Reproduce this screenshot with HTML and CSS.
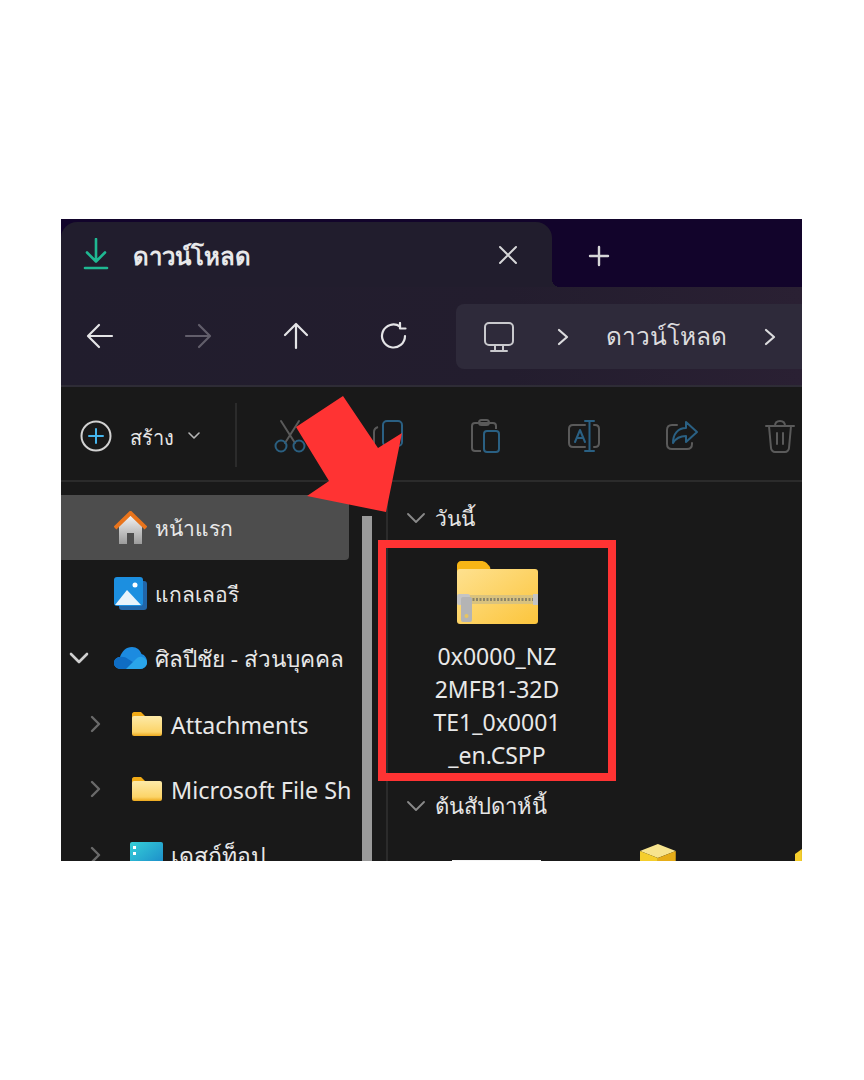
FILE: index.html
```html
<!DOCTYPE html>
<html lang="th">
<head>
    <meta charset="UTF-8">
    <meta name="viewport" content="width=device-width, initial-scale=1.0">
    <title>ดาวน์โหลด</title>
    <link rel="stylesheet" href="styles.css">
</head>
<body>
    <div class="window">
        <!-- Tab strip -->
        <div class="tabstrip">
            <div class="tab">
                <svg class="tab-icon" width="26" height="34" viewBox="0 0 26 34" fill="none" stroke="#1fb892" stroke-width="2.6" stroke-linecap="round" stroke-linejoin="round">
                    <path d="M13 1V23M4 14.500L13 23.500L22 14.500"/>
                    <path d="M2 30H24"/>
                </svg>
                <span class="tab-title">ดาวน์โหลด</span>
                <svg class="tab-close" width="20" height="20" viewBox="0 0 20 20" stroke="#d6d6d8" stroke-width="2" stroke-linecap="round">
                    <path d="M2 2L18 18M18 2L2 18"/>
                </svg>
            </div>
            <svg class="tab-new" width="22" height="22" viewBox="0 0 22 22" stroke="#d6d6d8" stroke-width="2.4" stroke-linecap="round">
                <path d="M11 2V20M2 11H20"/>
            </svg>
        </div>

        <!-- Navigation and address bar -->
        <div class="navbar">
            <div class="nav-buttons">
                <svg width="28" height="26" viewBox="0 0 28 26" fill="none" stroke="#e4e4e6" stroke-width="2.2" stroke-linecap="round" stroke-linejoin="round">
                    <path d="M26 13H3M13 2L2 13L13 24"/>
                </svg>
                <svg width="28" height="26" viewBox="0 0 28 26" fill="none" stroke="#625e6b" stroke-width="2.2" stroke-linecap="round" stroke-linejoin="round">
                    <path d="M2 13H25M15 2L26 13L15 24"/>
                </svg>
                <svg width="26" height="28" viewBox="0 0 26 28" fill="none" stroke="#e4e4e6" stroke-width="2.2" stroke-linecap="round" stroke-linejoin="round">
                    <path d="M13 26V3M2 13L13 2L24 13"/>
                </svg>
                <svg width="28" height="28" viewBox="0 0 28 28" fill="none" stroke="#e4e4e6" stroke-width="2.2" stroke-linecap="round" stroke-linejoin="round">
                    <path d="M25 14A11.500 11.500 0 1 1 20 4.500"/>
                    <path d="M20 1V6.500H25.500"/>
                </svg>
            </div>
            <div class="address">
                <svg class="pc-icon" width="32" height="32" viewBox="0 0 32 32" fill="none" stroke="#c9c9cd" stroke-width="2" stroke-linecap="round" stroke-linejoin="round">
                    <rect x="2" y="2" width="28" height="22" rx="4"/>
                    <path d="M12 24V29M20 24V29M8 30H24"/>
                </svg>
                <svg width="12" height="18" viewBox="0 0 12 18" fill="none" stroke="#dcdcde" stroke-width="2.2" stroke-linecap="round" stroke-linejoin="round"><path d="M2 2L10 9L2 16"/></svg>
                <span class="crumb">ดาวน์โหลด</span>
                <svg width="12" height="18" viewBox="0 0 12 18" fill="none" stroke="#dcdcde" stroke-width="2.2" stroke-linecap="round" stroke-linejoin="round"><path d="M2 2L10 9L2 16"/></svg>
            </div>
        </div>

        <!-- Command bar -->
        <div class="toolbar">
            <div class="new-btn">
                <svg width="32" height="32" viewBox="0 0 32 32" fill="none" stroke-width="2" stroke-linecap="round">
                    <circle cx="16" cy="16" r="14.5" stroke="#d2d2d2"/>
                    <path d="M16 9V23M9 16H23" stroke="#45b6ee"/>
                </svg>
                <span class="new-label">สร้าง</span>
                <svg width="12" height="8" viewBox="0 0 12 8" fill="none" stroke="#b5b5b5" stroke-width="1.6" stroke-linecap="round" stroke-linejoin="round"><path d="M1 1L6 6L11 1"/></svg>
            </div>
            <div class="tool-sep"></div>
            <div class="tools">
                <div class="tool">
                    <svg width="32" height="34" viewBox="0 0 32 34" fill="none" stroke-width="2" stroke-linecap="round">
                        <path d="M7 2L21 24M25 2L11 24" stroke="#5a5a5a"/>
                        <circle cx="7" cy="27" r="5.5" stroke="#2a5f80"/>
                        <circle cx="25" cy="27" r="5.5" stroke="#2a5f80"/>
                    </svg>
                </div>
                <div class="tool">
                    <svg width="32" height="34" viewBox="0 0 32 34" fill="none" stroke-width="2" stroke-linejoin="round">
                        <path d="M6 8C3 9 2 11 2 13V26C2 30 4 32 8 32H18" stroke="#5a5a5a"/>
                        <rect x="11" y="2" width="19" height="25" rx="4" stroke="#2a6083"/>
                    </svg>
                </div>
                <div class="tool">
                    <svg width="32" height="34" viewBox="0 0 32 34" fill="none" stroke-width="2" stroke-linejoin="round">
                        <path d="M11 32H5C3 32 2 31 2 29V7C2 5 3 4 5 4H23C25 4 26 5 26 7V10" stroke="#5a5a5a"/>
                        <rect x="9" y="1" width="10" height="5" rx="2.5" stroke="#5a5a5a"/>
                        <rect x="14" y="12" width="15" height="21" rx="3" stroke="#2a6083"/>
                    </svg>
                </div>
                <div class="tool">
                    <svg width="34" height="34" viewBox="0 0 34 34" fill="none" stroke-width="2" stroke-linecap="round" stroke-linejoin="round">
                        <path d="M18 6H6C3.500 6 2 7.500 2 10V24C2 26.500 3.500 28 6 28H18M27 6H28C30.500 6 32 7.500 32 10V24C32 26.500 30.500 28 28 28H27" stroke="#5a5a5a"/>
                        <path d="M8 23L13 11L18 23M10 19H16M22.500 2V32M18 2H27M18 32H27" stroke="#2a6083"/>
                    </svg>
                </div>
                <div class="tool">
                    <svg width="34" height="34" viewBox="0 0 34 34" fill="none" stroke-width="2" stroke-linecap="round" stroke-linejoin="round">
                        <path d="M12 6H7C4 6 2 8 2 11V25C2 28 4 30 7 30H22C25 30 27 28 27 25V24" stroke="#5a5a5a"/>
                        <path d="M21 3L32 13L21 23V17C15 17 11 19 8 24C8 15 13 9 21 9Z" stroke="#2a6083"/>
                    </svg>
                </div>
                <div class="tool">
                    <svg width="32" height="34" viewBox="0 0 32 34" fill="none" stroke="#5a5a5a" stroke-width="2" stroke-linecap="round" stroke-linejoin="round">
                        <path d="M2 7H30M11 7C11 4 13 2 16 2C19 2 21 4 21 7"/>
                        <path d="M5 7L7 29C7 31 9 33 11 33H21C23 33 25 31 25 29L27 7"/>
                        <path d="M13 14V25M19 14V25"/>
                    </svg>
                </div>
            </div>
        </div>

        <div class="main">
            <!-- Navigation pane -->
            <div class="sidebar">
                <div class="tree">
                    <div class="row row-active row-thai">
                        <span class="twisty"></span>
                        <svg class="row-icon" width="33" height="33" viewBox="0 0 33 33">
                            <defs>
                                <linearGradient id="wall" x1="0" y1="0" x2="0" y2="1">
                                    <stop offset="0" stop-color="#f4f4f4"/>
                                    <stop offset="1" stop-color="#9b9b9b"/>
                                </linearGradient>
                            </defs>
                            <path d="M5 15L16.500 4L28 15V33H20V22H13V33H5Z" fill="url(#wall)"/>
                            <path d="M1 17L16.500 2L32 17" fill="none" stroke="#e8741c" stroke-width="4"/>
                        </svg>
                        <span class="row-text">หน้าแรก</span>
                    </div>
                    <div class="row row-thai">
                        <span class="twisty"></span>
                        <svg class="row-icon" width="33" height="33" viewBox="0 0 33 33">
                            <rect x="5" y="4" width="28" height="29" rx="3" fill="#2165a8"/>
                            <rect x="0" y="0" width="29" height="29" rx="3" fill="#1c8fe0"/>
                            <path d="M1 28L13 13L27 28Z" fill="#e8f3fb"/>
                            <circle cx="21" cy="8" r="2.500" fill="#ffffff"/>
                        </svg>
                        <span class="row-text">แกลเลอรี</span>
                    </div>
                    <div class="row row-account">
                        <svg class="twisty" width="36" height="12" viewBox="0 0 36 12" fill="none" stroke="#cfcfcf" stroke-width="2.600" stroke-linecap="round" stroke-linejoin="round"><path d="M10 2L18 10L26 2"/></svg>
                        <svg class="row-icon" width="33" height="22" viewBox="0 0 33 22">
                            <path d="M7 22C3 22 0 19.500 0 16C0 12.500 3 10 6 10C8 4 12 0 18 0C23 0 26 3 27.500 7C31 8 33 11 33 15C33 19 30 22 26 22Z" fill="#1c8be0"/>
                            <path d="M7 22C3 22 0 19.500 0 16C0 12.500 3 10 6 10C9 9.500 12 10.500 14 12L22 17L26 22Z" fill="#0f6dc4"/>
                            <path d="M12 22L22 12C24 10 26 9.500 28 10C31 11 33 12.500 33 15.500C33 19 30 22 26 22Z" fill="#2aa5ea"/>
                        </svg>
                        <span class="row-text">ศิลปีชัย - ส่วนบุคคล</span>
                    </div>
                    <div class="row row-nested">
                        <svg class="twisty" width="36" height="18" viewBox="0 0 36 18" fill="none" stroke="#6a6a6a" stroke-width="2.400" stroke-linecap="round" stroke-linejoin="round"><path d="M14 2L21 9L14 16"/></svg>
                        <svg class="row-icon" width="30" height="24" viewBox="0 0 30 24">
                            <defs>
                                <linearGradient id="small-folder" x1="0" y1="0" x2="0" y2="1">
                                    <stop offset="0" stop-color="#fdeaa8"/>
                                    <stop offset="0.8" stop-color="#fcd468"/>
                                    <stop offset="1" stop-color="#eda91c"/>
                                </linearGradient>
                            </defs>
                            <path d="M0 2C0 1 1 0 2 0H9L13 4V7H0Z" fill="#f2ab16"/>
                            <rect x="0" y="4" width="30" height="20" rx="2" fill="url(#small-folder)"/>
                        </svg>
                        <span class="row-text">Attachments</span>
                    </div>
                    <div class="row row-nested row-long">
                        <svg class="twisty" width="36" height="18" viewBox="0 0 36 18" fill="none" stroke="#6a6a6a" stroke-width="2.400" stroke-linecap="round" stroke-linejoin="round"><path d="M14 2L21 9L14 16"/></svg>
                        <svg class="row-icon" width="30" height="24" viewBox="0 0 30 24">
                            <path d="M0 2C0 1 1 0 2 0H9L13 4V7H0Z" fill="#f2ab16"/>
                            <rect x="0" y="4" width="30" height="20" rx="2" fill="url(#small-folder)"/>
                        </svg>
                        <span class="row-text">Microsoft File Sh</span>
                    </div>
                    <div class="row row-nested">
                        <svg class="twisty" width="36" height="18" viewBox="0 0 36 18" fill="none" stroke="#6a6a6a" stroke-width="2.400" stroke-linecap="round" stroke-linejoin="round"><path d="M14 2L21 9L14 16"/></svg>
                        <svg class="row-icon row-icon-wide" width="33" height="26" viewBox="0 0 33 26">
                            <defs>
                                <linearGradient id="desktop" x1="0" y1="0" x2="1" y2="1">
                                    <stop offset="0" stop-color="#35d0d8"/>
                                    <stop offset="1" stop-color="#1a86c8"/>
                                </linearGradient>
                            </defs>
                            <rect width="33" height="26" rx="2" fill="url(#desktop)"/>
                            <rect x="3" y="4" width="3" height="3" fill="#ffffff"/>
                            <rect x="3" y="10" width="3" height="3" fill="#ffffff"/>
                        </svg>
                        <span class="row-text">เดสก์ท็อป</span>
                    </div>
                </div>
                <div class="scrollbar"></div>
            </div>

            <!-- File list -->
            <div class="content">
                <div class="group-head">
                    <svg width="18" height="10" viewBox="0 0 18 10" fill="none" stroke="#8a8a8a" stroke-width="1.800" stroke-linecap="round" stroke-linejoin="round"><path d="M1 1L9 9L17 1"/></svg>
                    <span class="group-today">วันนี้</span>
                </div>
                <div class="tile">
                    <svg class="tile-icon" width="81" height="63" viewBox="0 0 81 63">
                        <defs>
                            <linearGradient id="folder" x1="0" y1="0" x2="1" y2="1">
                                <stop offset="0" stop-color="#fee18f"/>
                                <stop offset="1" stop-color="#fcc53c"/>
                            </linearGradient>
                        </defs>
                        <path d="M0 4C0 2 2 0 4 0H24C28 0 30 2 33 6C34 9 33 14 28 14H0Z" fill="#f7b516"/>
                        <rect x="0" y="8" width="81" height="55" rx="3" fill="url(#folder)"/>
                        <rect x="12" y="34" width="64" height="9" fill="#d9c27e"/>
                        <path d="M12 38.500H76" stroke="#8c8468" stroke-width="3" stroke-dasharray="2 1.500"/>
                        <rect x="0" y="33" width="13" height="11" rx="2" fill="#c4c4c4"/>
                        <rect x="76" y="33" width="5" height="11" fill="#c4c4c4"/>
                        <rect x="4" y="36" width="11" height="25" rx="2" fill="#b4b4b4"/>
                        <circle cx="9.500" cy="55" r="2" fill="#e8c560"/>
                    </svg>
                    <div class="tile-name">0x0000_NZ<br>2MFB1-32D<br>TE1_0x0001<br>_en.CSPP</div>
                </div>
                <div class="group-head group-week">
                    <svg width="18" height="10" viewBox="0 0 18 10" fill="none" stroke="#8a8a8a" stroke-width="1.800" stroke-linecap="round" stroke-linejoin="round"><path d="M1 1L9 9L17 1"/></svg>
                    <span>ต้นสัปดาห์นี้</span>
                </div>
                <div class="thumbs">
                    <div class="thumb-doc"></div>
                    <svg class="thumb-box" width="38" height="18" viewBox="0 0 38 18">
                        <path d="M19 0L37 7L19 14L1 7Z" fill="#f7e48e"/>
                        <path d="M1 7L19 14V18H1Z" fill="#f5ce2c"/>
                        <path d="M37 7L19 14V18H37Z" fill="#e6ad18"/>
                    </svg>
                    <svg class="thumb-box-far" width="7" height="13" viewBox="0 0 7 13">
                        <path d="M7 0V13H0V5Z" fill="#f5ce2c"/>
                    </svg>
                </div>
            </div>
        </div>

        <!-- Red arrow annotation -->
        <svg class="arrow" width="741" height="642" viewBox="0 0 741 642">
            <polygon points="282,177 317,229 341,214 325,293 246,277 268,262 235,208" fill="#ff3333"/>
        </svg>
    </div>
</body>
</html>
```

FILE: styles.css
```css
body {
    margin: 0;
    padding: 219px 0 0 61px;
    background: #fff;
    font-family: "Noto Sans", "Open Sans", sans-serif;
}
.window {
    position: relative;
    width: 741px;
    height: 642px;
    overflow: hidden;
    display: flex;
    flex-direction: column;
    background: #191919;
    color: #e6e6e6;
}
.tabstrip {
    height: 68px;
    flex: none;
    display: flex;
    align-items: flex-end;
    background: #12042b;
}
.tab {
    position: relative;
    width: 491px;
    height: 65px;
    box-sizing: border-box;
    padding: 0 34px 0 22px;
    display: flex;
    align-items: center;
    background: #211d2d;
    border-radius: 16px 16px 0 0;
}
.tab::after {
    content: "";
    position: absolute;
    left: 100%;
    bottom: 0;
    width: 8px;
    height: 8px;
    background: radial-gradient(circle at 100% 0, transparent 8px, #211d2d 8px);
}
.tab-title {
    margin-left: 24px;
    padding-top: 4px;
    font-size: 24px;
    font-weight: 700;
    color: #e8e8ea;
}
.tab-close {
    margin-left: auto;
}
.tab-new {
    margin: 0 0 20px 36px;
}
.navbar {
    height: 98px;
    flex: none;
    display: flex;
    align-items: flex-start;
    background: linear-gradient(90deg, #211d2d 0%, #231d2e 60%, #2a2033 100%);
    border-bottom: 2px solid #2e2c36;
}
.nav-buttons {
    width: 395px;
    height: 100%;
    flex: none;
    display: grid;
    grid-template-columns: repeat(4, 78px);
    column-gap: 20px;
    place-items: center;
}
.address {
    flex: 1;
    height: 65px;
    margin-top: 17px;
    padding-left: 27px;
    display: flex;
    align-items: center;
    background: #2e2a3a;
    border-radius: 8px 0 0 8px;
}
.pc-icon {
    margin-right: 42px;
}
.crumb {
    margin: 0 37px;
    font-size: 24.500px;
    color: #dcdcde;
}
.toolbar {
    height: 93px;
    flex: none;
    display: flex;
    align-items: center;
    border-bottom: 2px solid #2b2b2b;
}
.new-btn {
    width: 141px;
    padding-left: 19px;
    margin-top: 4px;
    box-sizing: border-box;
    display: flex;
    align-items: center;
    flex: none;
}
.new-label {
    margin: 0 14px 0 18px;
    padding-top: 4px;
    font-size: 20px;
    color: #e6e6e6;
}
.tool-sep {
    width: 2px;
    height: 64px;
    flex: none;
    margin: 3px 0 0 33px;
    background: #2b2b2b;
}
.tools {
    display: flex;
    margin: 5px 0 0 4px;
}
.tool {
    width: 98px;
    flex: none;
    display: flex;
    justify-content: center;
}
.main {
    flex: 1;
    min-height: 0;
    display: flex;
}
.sidebar {
    width: 325px;
    flex: none;
    display: flex;
    border-right: 2px solid #2b2b2b;
}
.tree {
    width: 290px;
    flex: none;
    padding-top: 13px;
    overflow: hidden;
}
.row {
    height: 65.4px;
    display: flex;
    align-items: center;
    white-space: nowrap;
    font-size: 23px;
}
.row-thai {
    font-size: 21px;
}
.row-account {
    font-size: 22.5px;
}
.row-long {
    font-size: 23.4px;
}
.row-active {
    margin-right: 2px;
    background: #4d4d4d;
    border-radius: 0 0 4px 0;
}
.row-nested {
    padding-left: 17px;
}
.twisty {
    width: 36px;
    flex: none;
    margin-right: 17px;
}
.row-nested .twisty {
    margin-right: 18px;
}
.row-icon {
    flex: none;
    margin-right: 8px;
}
.row-nested .row-icon {
    margin-right: 9px;
}
.row-nested .row-icon-wide {
    margin: 0 8px 0 -2px;
}
.row-text {
    padding-top: 2px;
    color: #e8e8e8;
}
.scrollbar {
    width: 10px;
    flex: none;
    margin: 34px 0 0 11px;
    background: #9a9a9a;
}
.content {
    flex: 1;
    min-width: 0;
    padding: 21px 0 0 0;
}
.group-head {
    height: 30px;
    padding-left: 19px;
    display: flex;
    align-items: center;
    gap: 10px;
    font-size: 22px;
    color: #e6e6e6;
}
.group-today {
    font-size: 21px;
}
.tile {
    width: 218px;
    height: 221px;
    box-sizing: border-box;
    margin-top: 17px;
    padding-top: 11px;
    outline: 8px solid #ff3333;
    outline-offset: 2px;
    text-align: center;
}
.tile-icon {
    display: block;
    margin: 0 auto 16px;
}
.tile-name {
    font-size: 23px;
    line-height: 33px;
    color: #e8e8e8;
}
.group-week {
    margin-top: 20px;
}
.thumbs {
    height: 41px;
    margin-top: 23px;
    display: flex;
    align-items: flex-start;
}
.thumb-doc {
    width: 90px;
    height: 2px;
    margin: 16px 0 0 64px;
    background: #f4f4f4;
}
.thumb-box {
    margin-left: 98px;
}
.thumb-box-far {
    margin: 5px 0 0 118px;
}
.arrow {
    position: absolute;
    left: 0;
    top: 0;
    pointer-events: none;
}
```
